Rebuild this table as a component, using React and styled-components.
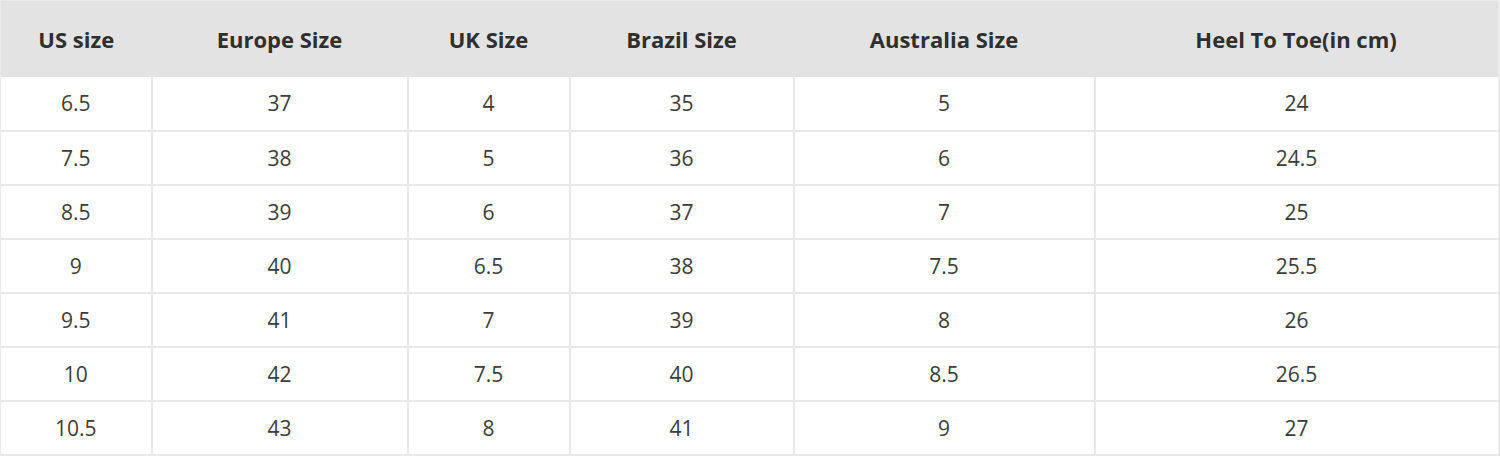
import React from "react";
import styled, { createGlobalStyle } from "styled-components";

const Global = createGlobalStyle`
  html, body { margin: 0; padding: 0; background: #fff; }
  body { font-family: "Open Sans", "Noto Sans", sans-serif; }
`;

const Wrap = styled.div`
  width: 1500px;
  height: 456px;
  overflow: hidden;
  background: #fff;
`;

const Table = styled.table`
  width: 1498px;
  border-collapse: collapse;
  table-layout: fixed;
  border-right: 2px solid #ececec;
  border-left: 1px solid #ececec;
`;

const HeadRow = styled.tr`
  height: 76px;
  background: #e3e3e3;
`;

const Th = styled.th`
  font-family: "Open Sans", sans-serif;
  font-weight: 700;
  font-size: 22px;
  color: #2f2f2f;
  text-align: center;
  padding: 0;
  border-top: 1px solid #ececec;
`;

const Row = styled.tr`
  height: 54px;
`;

const Td = styled.td`
  font-family: "Open Sans", sans-serif;
  font-weight: 400;
  font-size: 21px;
  color: #3c3c3c;
  text-align: center;
  padding: 0;
  border-bottom: 2px solid #e8e8e8;
  border-left: 2px solid #e8e8e8;
  &:first-child { border-left: none; }
`;

const cols = [151, 256, 162, 224, 301, 404];
const headers = ["US size", "Europe Size", "UK Size", "Brazil Size", "Australia Size", "Heel To Toe(in cm)"];
const rows = [
  ["6.5", "37", "4", "35", "5", "24"],
  ["7.5", "38", "5", "36", "6", "24.5"],
  ["8.5", "39", "6", "37", "7", "25"],
  ["9", "40", "6.5", "38", "7.5", "25.5"],
  ["9.5", "41", "7", "39", "8", "26"],
  ["10", "42", "7.5", "40", "8.5", "26.5"],
  ["10.5", "43", "8", "41", "9", "27"],
];

export default function App() {
  return (
    <Wrap>
      <Global />
      <Table>
        <colgroup>
          {cols.map((w, i) => (
            <col key={i} style={{ width: w }} />
          ))}
        </colgroup>
        <thead>
          <HeadRow>
            {headers.map((h) => (
              <Th key={h}>{h}</Th>
            ))}
          </HeadRow>
        </thead>
        <tbody>
          {rows.map((r, i) => (
            <Row key={i}>
              {r.map((c, j) => (
                <Td key={j}>{c}</Td>
              ))}
            </Row>
          ))}
        </tbody>
      </Table>
    </Wrap>
  );
}
